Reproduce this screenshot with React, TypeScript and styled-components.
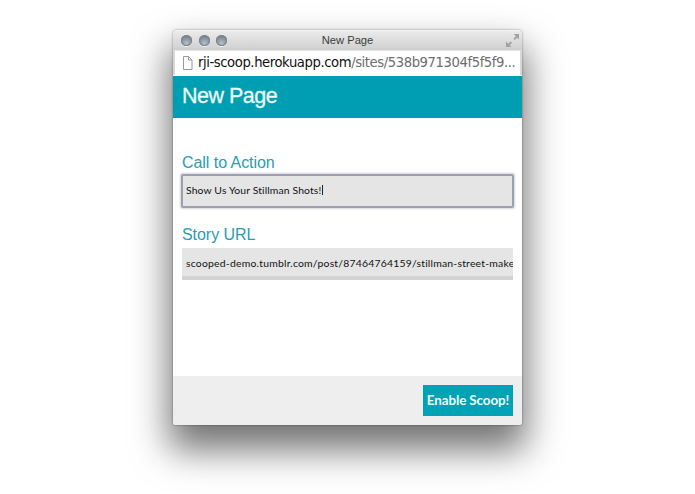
import React from 'react';
import styled, { createGlobalStyle } from 'styled-components';

const GlobalStyle = createGlobalStyle`
  html, body {
    margin: 0;
    padding: 0;
    background: #fff;
    overflow: hidden;
  }
`;

const Page = styled.div`
  width: 695px;
  height: 494px;
  padding: 30px 0 0 173px;
  box-sizing: border-box;
  background: #fff;
  overflow: hidden;
`;

const Window = styled.div`
  width: 349px;
  height: 395px;
  display: flex;
  flex-direction: column;
  border-radius: 4px 4px 3px 3px;
  overflow: hidden;
  background: #fff;
  box-shadow: 0 0 2px rgba(0, 0, 0, 0.5), 0 21px 36px 4px rgba(0, 0, 0, 0.55);
`;

const TitleBar = styled.div`
  height: 20px;
  flex: none;
  display: grid;
  grid-template-columns: 1fr auto 1fr;
  align-items: center;
  padding: 0 3px;
  background: linear-gradient(#ebebeb, #cfcfcf);
  border-top: 1px solid #f4f4f4;
  box-sizing: border-box;
`;

const Lights = styled.div`
  display: flex;
  gap: 6.6px;
  padding-left: 5px;
`;

const Light = styled.span`
  width: 11px;
  height: 11px;
  border-radius: 50%;
  background: radial-gradient(circle at 50% 75%, #b5c0c8, #77828b 70%);
  box-shadow: inset 0 0 0 1px #7d868d, 0 1px 0 rgba(255, 255, 255, 0.6);
`;

const WindowTitle = styled.div`
  font: 11.2px/1 "Liberation Sans", Arial, sans-serif;
  color: #3c3c3c;
`;

const ExpandSlot = styled.div`
  display: flex;
  justify-content: flex-end;
`;

const UrlBar = styled.div`
  height: 25px;
  flex: none;
  display: flex;
  align-items: center;
  gap: 5px;
  padding: 0 5px 0 7px;
  background: #fff;
  border-top: 1px solid #e6e6e6;
  border-left: 2px solid #d8d8d8;
  border-right: 2px solid #d8d8d8;
  box-sizing: border-box;
  font: 13.2px/1 "DejaVu Sans", sans-serif;
  letter-spacing: -0.42px;
  white-space: nowrap;
  overflow: hidden;
`;

const FileIcon = styled.svg`
  flex: none;
`;

const Host = styled.span`
  color: #111;
`;

const UrlPath = styled.span`
  color: #6d6d6d;
`;

const Header = styled.div`
  height: 42px;
  flex: none;
  margin-top: 1px;
  display: flex;
  align-items: center;
  padding: 0 9px;
  background: #009eb2;
  color: #eafafa;
  font: 21.5px/1 "Liberation Sans", Arial, sans-serif;
  letter-spacing: -0.5px;
  -webkit-text-stroke: 0.3px #eafafa;
`;

const Form = styled.div`
  flex: 1;
  display: flex;
  flex-direction: column;
  padding: 36px 9px 0;
  background: #fff;
`;

const Label = styled.div`
  font: 16px/18px "Liberation Sans", Arial, sans-serif;
  letter-spacing: -0.05px;
  color: #2a9cb0;
  margin-bottom: 4px;
`;

const Field = styled.div<{ $focused?: boolean }>`
  height: 32px;
  flex: none;
  box-sizing: border-box;
  display: flex;
  align-items: center;
  padding: ${(p) => (p.$focused ? '0 0 2px 4px' : '2px 0 0 4px')};
  margin: ${(p) => (p.$focused ? '-1px 0 19px' : '0')};
  background: #e5e5e6;
  font: 10.4px/1 "Lato", sans-serif;
  letter-spacing: ${(p) => (p.$focused ? '0.12px' : '0.22px')};
  color: #111;
  white-space: nowrap;
  overflow: hidden;
  border-bottom: ${(p) => (p.$focused ? '0' : '4px solid #d2d2d3')};
  ${(p) =>
    p.$focused &&
    `
    border-radius: 1px;
    box-shadow: 0 0 0 1px #9aa0ac, inset 0 0 0 1px #9aa0ac, 0 0 2px 2px rgba(150, 156, 170, 0.4);
  `}
`;

const Caret = styled.span`
  display: inline-block;
  width: 1px;
  height: 10px;
  margin-left: 1px;
  background: #222;
`;

const Footer = styled.div`
  height: 49px;
  flex: none;
  display: flex;
  justify-content: flex-end;
  align-items: flex-start;
  padding: 9px 9px 0 0;
  box-sizing: border-box;
  background: #eee;
`;

const EnableButton = styled.button`
  width: 90px;
  height: 31px;
  border: 0;
  padding: 0;
  background: #00a2b5;
  color: #f0fbfb;
  font: bold 13.4px/1 "Lato", sans-serif;
  letter-spacing: -0.1px;
`;

const PageIcon = () => (
  <FileIcon width="11" height="14" viewBox="0 0 11 14" fill="none" stroke="#9a9a9a" strokeWidth="1">
    <path d="M1.5 .5h5l3.5 3.5v9.5h-8.5z" />
    <path d="M6.5 .5v3.5h3.5" />
  </FileIcon>
);

const ExpandIcon = () => (
  <svg width="13" height="13" viewBox="0 0 13 13" fill="#a3a3a3">
    <path d="M7.5 0h5.5v5.5l-1.8-1.8-2.4 2.4-1.4-1.4 2.4-2.4z" />
    <path d="M0 7.5v5.5h5.5l-1.8-1.8 2.4-2.4-1.4-1.4-2.4 2.4z" />
  </svg>
);

export default function App() {
  return (
    <>
      <GlobalStyle />
      <Page>
        <Window>
          <TitleBar>
            <Lights>
              <Light />
              <Light />
              <Light />
            </Lights>
            <WindowTitle>New Page</WindowTitle>
            <ExpandSlot>
              <ExpandIcon />
            </ExpandSlot>
          </TitleBar>
          <UrlBar>
            <PageIcon />
            <span>
              <Host>rji-scoop.herokuapp.com</Host>
              <UrlPath>/sites/538b971304f5f5f9...</UrlPath>
            </span>
          </UrlBar>
          <Header>New Page</Header>
          <Form>
            <Label>Call to Action</Label>
            <Field $focused>
              Show Us Your Stillman Shots!
              <Caret />
            </Field>
            <Label>Story URL</Label>
            <Field>scooped-demo.tumblr.com/post/87464764159/stillman-street-makeover</Field>
          </Form>
          <Footer>
            <EnableButton>Enable Scoop!</EnableButton>
          </Footer>
        </Window>
      </Page>
    </>
  );
}
